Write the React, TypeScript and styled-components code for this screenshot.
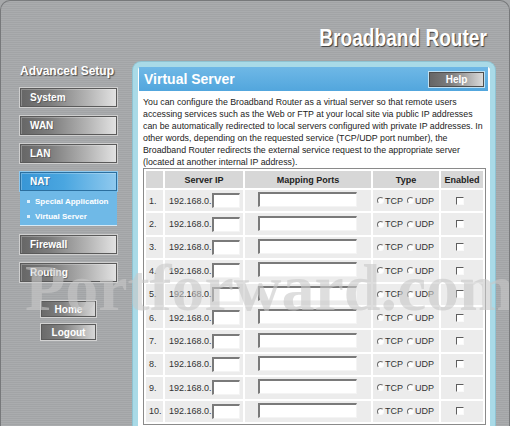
import styled, { createGlobalStyle } from "styled-components";

const GlobalStyle = createGlobalStyle`
  html, body {
    margin: 0;
    padding: 0;
    background: #a6a8aa;
  }
  body {
    font-family: "Liberation Sans", Arial, sans-serif;
    width: 510px;
    height: 426px;
    overflow: hidden;
  }
  * { box-sizing: border-box; }
`;

const Page = styled.div`
  position: relative;
  width: 510px;
  height: 426px;
  border: 1px solid #77797b;
  border-bottom: none;
  border-radius: 10px 10px 0 0;
  background: repeating-linear-gradient(
    180deg,
    #aaacae 0px,
    #aaacae 1px,
    #a2a4a6 1px,
    #a2a4a6 2px
  );
  overflow: hidden;
  display: flex;
  flex-direction: column;
`;

const TopBar = styled.div`
  height: 57px;
  display: flex;
  justify-content: flex-end;
  align-items: flex-end;
  padding: 0 22px 8px 0;
`;

const Brand = styled.div`
  font-size: 23px;
  font-weight: bold;
  line-height: 1;
  color: #fff;
  text-shadow: 1px 1px 1px #3c3c3c;
  transform: scaleX(0.83);
  transform-origin: right bottom;
  white-space: nowrap;
`;

const Body = styled.div`
  flex: 1;
  display: flex;
  min-height: 0;
`;

const Sidebar = styled.div`
  width: 132px;
  padding-left: 19px;
  display: flex;
  flex-direction: column;
`;

const SideTitle = styled.div`
  font-size: 12px;
  font-weight: bold;
  line-height: 14px;
  color: #fff;
  text-shadow: 1px 1px 1px #4a4a4a;
  margin: 6px 0 10px 0;
  white-space: nowrap;
`;

const NavList = styled.div`
  display: flex;
  flex-direction: column;
  gap: 9px;
`;

const NavButton = styled.div<{ $active?: boolean }>`
  width: 97px;
  height: 19px;
  display: flex;
  align-items: center;
  padding-left: 9px;
  font-size: 10px;
  font-weight: bold;
  color: #fff;
  text-shadow: 1px 1px 0 rgba(0, 0, 0, 0.25);
  border: 1px solid ${({ $active }) => ($active ? "#2b6f9f" : "#5a5a5a")};
  box-shadow: 0 0 0 1px ${({ $active }) => ($active ? "#8fcaf0" : "#cfcfcf")},
    inset 1px 1px 0 rgba(255, 255, 255, 0.25);
  background: ${({ $active }) =>
    $active
      ? "linear-gradient(90deg, #3896d6 0%, #4aa6e0 45%, #8fc9ee 100%)"
      : "linear-gradient(90deg, #666 0%, #7c7c7c 30%, #b4b4b4 70%, #e2e2e2 100%)"};
`;

const NavGroup = styled.div`
  display: flex;
  flex-direction: column;
`;

const SubMenu = styled.div`
  width: 97px;
  height: 35px;
  padding: 3px 0 0 7px;
  background: #6fb9e7;
  border-bottom: 1px solid #d6eaf6;
`;

const SubItem = styled.div`
  display: flex;
  align-items: center;
  gap: 5px;
  height: 15px;
  font-size: 8px;
  font-weight: bold;
  color: #fff;
  white-space: nowrap;

  &::before {
    content: "";
    width: 3px;
    height: 3px;
    background: #dff0fb;
  }
`;

const SmallButtons = styled.div`
  display: flex;
  flex-direction: column;
  gap: 7px;
  margin: 19px 0 0 21px;
`;

const SmallButton = styled.div`
  width: 55px;
  height: 16px;
  display: flex;
  align-items: center;
  justify-content: center;
  font-size: 10px;
  font-weight: bold;
  color: #fff;
  border: 1px solid #5a5a5a;
  box-shadow: 0 0 0 1px #d2d2d2;
  background: linear-gradient(90deg, #6a6a6a 0%, #828282 40%, #d8d8d8 100%);
`;

const Panel = styled.div`
  width: 362px;
  margin-top: 4px;
  border: 5px solid #a9dae7;
  border-bottom: none;
  border-radius: 8px 8px 0 0;
  background: #fff;
  padding: 0 2px 0 1px;
  box-shadow: 0 0 0 1px #8fc3d2;
`;

const PanelHeader = styled.div`
  height: 24px;
  display: flex;
  align-items: center;
  justify-content: space-between;
  padding: 0 4px 0 5px;
  background: linear-gradient(180deg, #6fb8e6 0%, #52a6dd 100%);
`;

const PanelTitle = styled.div`
  font-size: 14px;
  font-weight: bold;
  color: #fff;
`;

const HelpButton = styled.div`
  width: 55px;
  height: 15px;
  display: flex;
  align-items: center;
  justify-content: center;
  font-size: 10px;
  font-weight: bold;
  color: #fff;
  border: 1px solid #4e4e4e;
  box-shadow: 0 0 0 1px #bfe0f2;
  background: linear-gradient(90deg, #666 0%, #7e7e7e 40%, #dadada 100%);
`;

const Intro = styled.p`
  margin: 0;
  padding: 5px 4px 0 4px;
  font-size: 8.8px;
  line-height: 12px;
  color: #222;
  white-space: nowrap;
`;

const Grid = styled.table`
  margin-left: 4px;
  width: 343px;
  border: 1px solid #8a8a8a;
  border-collapse: separate;
  border-spacing: 2px;
  font-size: 9px;
  color: #333;
  table-layout: fixed;
`;

const HeadCell = styled.th<{ $w?: number }>`
  height: 17px;
  padding: 0;
  background: #d7d7d7;
  font-size: 9px;
  font-weight: bold;
  color: #222;
  text-align: center;
  width: ${({ $w }) => ($w ? `${$w}px` : "auto")};
`;

const Cell = styled.td<{ $pad?: number }>`
  height: 21.4px;
  padding: 0 0 0 ${({ $pad }) => $pad ?? 3}px;
  background: #ececec;
  white-space: nowrap;
  vertical-align: middle;
`;

const IpWrap = styled.div`
  display: flex;
  align-items: center;
  padding-left: 1px;
`;

const TextBox = styled.span<{ $w: number }>`
  display: inline-block;
  width: ${({ $w }) => $w}px;
  height: 15px;
  background: #fff;
  border-top: 2px solid #7a7a7a;
  border-left: 2px solid #7a7a7a;
  border-right: 1px solid #f4f4f4;
  border-bottom: 1px solid #f4f4f4;
`;

const PortBox = styled(TextBox)`
  margin-left: 10px;
`;

const RadioGroup = styled.div`
  display: flex;
  align-items: center;
  padding-left: 1px;
`;

const Radio = styled.span`
  display: inline-block;
  width: 7px;
  height: 7px;
  border-radius: 50%;
  border-top: 1px solid #6c6c6c;
  border-left: 1px solid #6c6c6c;
  border-right: 1px solid #fafafa;
  border-bottom: 1px solid #fafafa;
  background: #fff;
  margin-right: 1px;
`;

const RadioLabel = styled.span`
  font-size: 9px;
  margin-right: 4px;
`;

const Check = styled.span`
  display: block;
  width: 8px;
  height: 8px;
  border-top: 1px solid #5e5e5e;
  border-left: 1px solid #5e5e5e;
  border-right: 1px solid #fafafa;
  border-bottom: 1px solid #fafafa;
  background: #fff;
`;

const Watermark = styled.div`
  position: absolute;
  left: 24px;
  top: 254px;
  font-family: "Liberation Serif", "Times New Roman", serif;
  font-size: 66px;
  font-weight: bold;
  line-height: 1;
  color: rgba(200, 200, 200, 0.6);
  pointer-events: none;
  white-space: nowrap;
`;

const rows = Array.from({ length: 10 }, (_, i) => i + 1);

export default function App() {
  return (
    <>
      <GlobalStyle />
      <Page>
        <TopBar>
          <Brand>Broadband Router</Brand>
        </TopBar>
        <Body>
          <Sidebar>
            <SideTitle>Advanced Setup</SideTitle>
            <NavList>
              <NavButton>System</NavButton>
              <NavButton>WAN</NavButton>
              <NavButton>LAN</NavButton>
              <NavGroup>
                <NavButton $active>NAT</NavButton>
                <SubMenu>
                  <SubItem>Special Application</SubItem>
                  <SubItem>Virtual Server</SubItem>
                </SubMenu>
              </NavGroup>
              <NavButton>Firewall</NavButton>
              <NavButton>Routing</NavButton>
            </NavList>
            <SmallButtons>
              <SmallButton>Home</SmallButton>
              <SmallButton>Logout</SmallButton>
            </SmallButtons>
          </Sidebar>
          <Panel>
            <PanelHeader>
              <PanelTitle>Virtual Server</PanelTitle>
              <HelpButton>Help</HelpButton>
            </PanelHeader>
            <Intro>
              You can configure the Broadband Router as a virtual server so that remote users
              <br />
              accessing services such as the Web or FTP at your local site via public IP addresses
              <br />
              can be automatically redirected to local servers configured with private IP addresses. In
              <br />
              other words, depending on the requested service (TCP/UDP port number), the
              <br />
              Broadband Router redirects the external service request to the appropriate server
              <br />
              (located at another internal IP address).
            </Intro>
            <Grid>
              <thead>
                <tr>
                  <HeadCell $w={17}></HeadCell>
                  <HeadCell $w={78}>Server IP</HeadCell>
                  <HeadCell $w={126}>Mapping Ports</HeadCell>
                  <HeadCell $w={66}>Type</HeadCell>
                  <HeadCell>Enabled</HeadCell>
                </tr>
              </thead>
              <tbody>
                {rows.map((n) => (
                  <tr key={n}>
                    <Cell>{n}.</Cell>
                    <Cell>
                      <IpWrap>
                        192.168.0.
                        <TextBox $w={28} />
                      </IpWrap>
                    </Cell>
                    <Cell>
                      <PortBox $w={99} />
                    </Cell>
                    <Cell>
                      <RadioGroup>
                        <Radio />
                        <RadioLabel>TCP</RadioLabel>
                        <Radio />
                        <RadioLabel>UDP</RadioLabel>
                      </RadioGroup>
                    </Cell>
                    <Cell $pad={15}>
                      <Check />
                    </Cell>
                  </tr>
                ))}
              </tbody>
            </Grid>
          </Panel>
        </Body>
        <Watermark>Portforward.com</Watermark>
      </Page>
    </>
  );
}
